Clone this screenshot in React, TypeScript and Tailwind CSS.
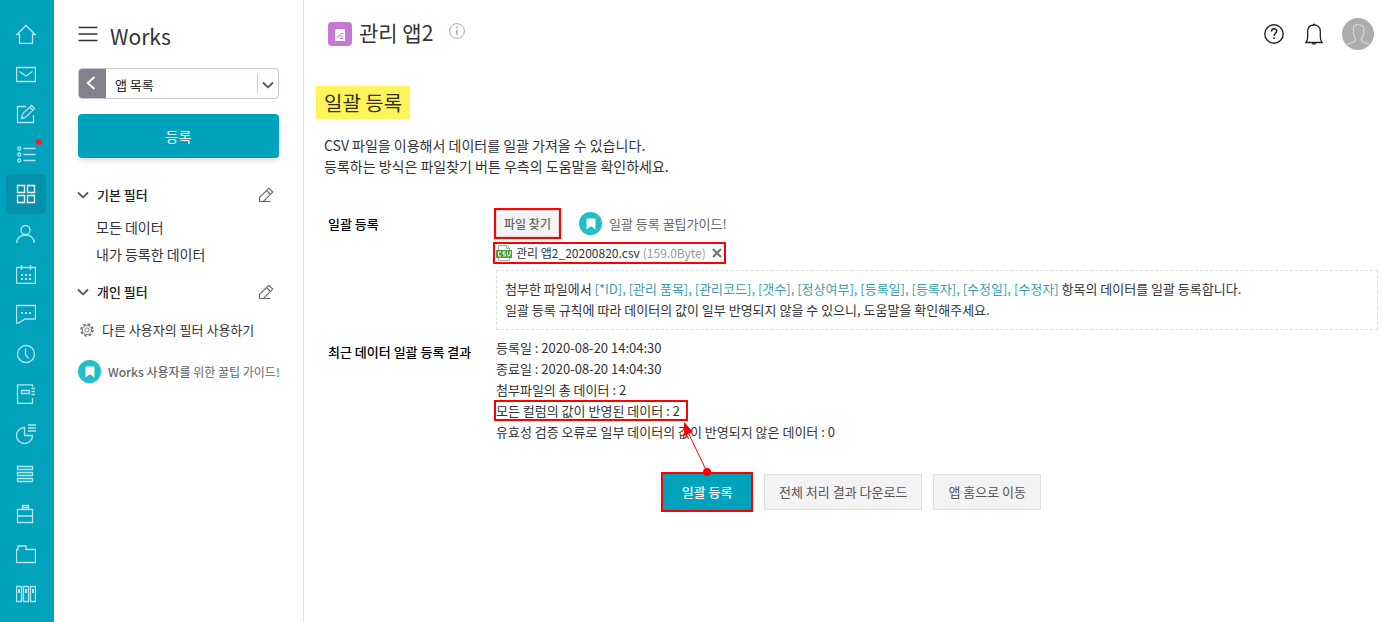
import React from 'react';

interface RailItem {
  label: string;
  icon: React.ReactNode;
  active?: boolean;
  dot?: boolean;
}

const RAIL: RailItem[] = [
  { label: '홈', icon: <path d="M1 10.5 10 1.5l9 9h-2.5v9h-13v-9z" /> },
  { label: '메일', icon: <path d="M.5 3.5h19v14H.5zM3.5 7.5l6.5 4.5 6.5-4.5" /> },
  { label: '게시판', icon: <path d="M10 2.5H1.5v16h16V11M5.5 14.500l1-4.500 9-8.500 3 3-9 9zM14 3.500l3 3" /> },
  {
    label: '할 일',
    dot: true,
    icon: (
      <>
        <circle cx="3.300" cy="4.500" r="1.500" />
        <circle cx="3.300" cy="10.500" r="1.500" />
        <circle cx="3.300" cy="16.500" r="1.500" />
        <path d="M7.500 4.500h12M7.500 10.500h12M7.500 16.500h12" />
      </>
    ),
  },
  { label: 'Works', active: true, icon: <path d="M1.500 1.500h7v7h-7zM11.500 1.500h7v7h-7zM1.500 11.500h7v7h-7zM11.500 11.500h7v7h-7z" /> },
  {
    label: '주소록',
    icon: (
      <>
        <circle cx="9.500" cy="6" r="4.500" />
        <path d="M.8 19c0-4.500 3.500-8 8.700-8s8.700 3.500 8.700 8" />
      </>
    ),
  },
  {
    label: '캘린더',
    icon: (
      <>
        <path d="M.5 3.500h19v16H.5zM5.500 1v5M14.500 1v5" />
        <path d="M5 11h2M9 11h2M13 11h2M5 15h2M9 15h2M13 15h2" strokeWidth="2" />
      </>
    ),
  },
  {
    label: '대화',
    icon: (
      <>
        <path d="M.5 1.500h19v13.500H9l-6.500 4h-2z" />
        <path d="M5 9h2M9 9h2M13 9h2" strokeWidth="2" />
      </>
    ),
  },
  {
    label: '근태',
    icon: (
      <>
        <circle cx="10" cy="10" r="8.500" />
        <path d="M9.500 4.500v6l3 4" />
      </>
    ),
  },
  {
    label: '보고',
    icon: <path d="M17 .8H1.500v18.700h15V14M16.500 .8v2M5.500 6.500h8v3h-8zM15.500 4.500h3.500M15.500 7.500h3.500M15.500 10.500h3.500" />,
  },
  {
    label: '설문',
    icon: (
      <>
        <path d="M8.500 3.500a8 8 0 1 0 8 8h-8z" />
        <path d="M12 1h8M12 4h8M12 7h8" strokeWidth="1.600" />
      </>
    ),
  },
  { label: '자료실', icon: <path d="M1.500 2.500h15v3h-15zM1.500 8.500h15v3h-15zM1.500 14.500h15v3h-15z" /> },
  { label: '전자결재', icon: <path d="M1.500 5.500h15v13h-15zM1.500 12h15M6.500 5V1.500h6V5M6.500 3.500h6" /> },
  { label: '문서함', icon: <path d="M.5 5.500h1.500v-3.500h8v3.500h9.500v13H.5z" /> },
  {
    label: '예약',
    icon: (
      <>
        <path d="M.5 2.500h5v15h-5zM7.500 2.500h5v15h-5zM14.500 2.500h5v15h-5z" />
        <path d="M3 5v4M10 5v4M17 5v4" strokeWidth="2" />
      </>
    ),
  },
];

const COLUMNS = ['*ID', '관리 품목', '관리코드', '갯수', '정상여부', '등록일', '등록자', '수정일', '수정자'];

const Chevron = ({ className = '' }: { className?: string }) => (
  <svg viewBox="0 0 12 8" className={`h-2 w-3 ${className}`} fill="none" stroke="#555" strokeWidth="1.800">
    <path d="M1 1.500 6 6.300l5-4.800" />
  </svg>
);

const Pencil = () => (
  <svg viewBox="0 0 16 16" className="size-4" fill="none" stroke="#666" strokeWidth="1.100">
    <path d="M1.500 14.500v-4L10.800 1.300l4 3.800-9.400 9.400zM8.600 3.600l3.900 3.900M1.500 14.500h11" />
  </svg>
);

const GuideMark = () => (
  <span className="flex size-[23px] shrink-0 items-center justify-center rounded-full bg-[#22bfc8]">
    <svg viewBox="0 0 10 12" className="h-3 w-2.5" fill="#fff">
      <path d="M.5 1.500Q.5.5 1.500.5h7q1 0 1 1v10L5 8.300.5 11.500z" />
    </svg>
  </span>
);

const FilterHeading = ({ title }: { title: string }) => (
  <div className="flex h-6 items-center justify-between pr-[5px]">
    <button className="flex items-center gap-2 text-[13px] font-medium text-[#222]">
      <Chevron className="-ml-px" />
      {title}
    </button>
    <button aria-label={`${title} 편집`}>
      <Pencil />
    </button>
  </div>
);

const Rail = () => (
  <nav className="w-[54px] shrink-0 bg-[#01a2bb] pt-3.5 pl-1.5">
    {RAIL.map(item => (
      <a
        key={item.label}
        href="#"
        aria-label={item.label}
        className={`relative flex size-10 items-center justify-center rounded ${item.active ? 'bg-[#0492ab] text-white' : 'text-[#b5e4ea]'}`}
      >
        <svg viewBox="0 0 20 20" className="size-5" fill="none" stroke="currentColor" strokeWidth="1.300">
          {item.icon}
        </svg>
        {item.dot && <span className="absolute top-[5px] right-1 size-1.5 rounded-full bg-[#fb1f1f]" />}
      </a>
    ))}
  </nav>
);

const Sidebar = () => (
  <aside className="w-[250px] shrink-0 border-r border-[#ddd] px-6 pt-5">
    <div className="flex h-8 items-center">
      <button aria-label="메뉴" className="pb-1">
        <svg viewBox="0 0 20 16" className="h-4 w-5" stroke="#333" strokeWidth="1.500">
          <path d="M.5 1.500h19M.5 8h19M.5 14.500h19" />
        </svg>
      </button>
      <h2 className="ml-3 text-[21px] leading-8 text-[#333]">Works</h2>
    </div>

    <div className="mt-4 flex h-[31px] overflow-hidden rounded border border-[#c8c8d6]">
      <button aria-label="뒤로" className="flex w-[27px] items-center justify-center bg-[#82828f] pr-1 pb-0.5">
        <svg viewBox="0 0 10 14" className="h-3.5 w-2.5" fill="none" stroke="#fff" strokeWidth="2">
          <path d="M8.500 1 1.800 7l6.700 6" />
        </svg>
      </button>
      <div className="relative flex flex-1 items-center">
        <select aria-label="앱 목록" className="h-full w-full appearance-none bg-transparent pt-0.5 pl-[9px] text-[13px] text-[#222]">
          <option>앱 목록</option>
        </select>
        <span className="pointer-events-none absolute right-0 flex h-[19px] items-center border-l border-[#ccc] px-1 pt-0.5">
          <Chevron />
        </span>
      </div>
    </div>

    <button className="mt-[15px] h-11 w-full rounded bg-[#01a2bb] text-sm text-white shadow-md">등록</button>

    <div className="mt-[25px]">
      <FilterHeading title="기본 필터" />
      <ul className="mt-[7px] pl-[18px] text-sm leading-[27px] text-[#333]">
        <li><a href="#">모든 데이터</a></li>
        <li><a href="#">내가 등록한 데이터</a></li>
      </ul>
    </div>
    <div className="mt-3">
      <FilterHeading title="개인 필터" />
    </div>

    <a href="#" className="mt-4 flex items-center gap-2 pl-0.5 text-[13px] leading-5 text-[#333]">
      <svg viewBox="0 0 16 16" className="size-3.5 shrink-0" fill="none" stroke="#777">
        <circle cx="8" cy="8" r="6.600" strokeWidth="2.200" strokeDasharray="2.900 2.284" />
        <circle cx="8" cy="8" r="5.200" />
        <circle cx="8" cy="8" r="2.400" />
      </svg>
      다른 사용자의 필터 사용하기
    </a>
    <a href="#" className="mt-5 flex items-center gap-[7px] text-xs whitespace-nowrap text-[#666]">
      <GuideMark />
      <span><span className="font-medium">Works 사용자를</span> 위한 꿀팁 가이드!</span>
    </a>
  </aside>
);

const Header = () => (
  <header className="flex items-start justify-between pt-[18px] pr-1 pl-1">
    <div className="flex h-8 items-center">
      <span className="flex size-6 items-center justify-center rounded bg-[#c678d4]">
        <svg viewBox="0 0 12 14" className="mt-0.5 h-3.5 w-3">
          <path d="M1 1h10v12H1z" fill="#fff" />
          <path d="M2.500 9h1.500l2.500-3.500M7 5.500h2.500M6 8h3.500M6 10.500h3.500" stroke="#c678d4" fill="none" />
        </svg>
      </span>
      <h1 className="ml-[7px] pb-[3px] text-[21px] leading-[29px] text-[#333]">관리 앱2</h1>
      <button aria-label="앱 정보" className="mb-1.5 ml-4">
        <svg viewBox="0 0 16 16" className="size-4" fill="none" stroke="#aaa">
          <circle cx="8" cy="8" r="7.400" />
          <path d="M8 3.500v1.800M8 6.800v5.200" strokeWidth="1.600" />
        </svg>
      </button>
    </div>
    <div className="flex items-center">
      <button aria-label="도움말">
        <svg viewBox="0 0 20 20" className="size-5" fill="none" stroke="#222">
          <circle cx="10" cy="10" r="9.200" strokeWidth="1.400" />
          <path d="M7.500 7.500c0-3.600 5.200-3.400 5.200-.4 0 2-2.600 2.300-2.600 4.700M10.100 13.200v1.800" strokeWidth="1.600" />
        </svg>
      </button>
      <button aria-label="알림" className="ml-5">
        <svg viewBox="0 0 20 22" className="h-[22px] w-5" fill="none" stroke="#222" strokeWidth="1.300">
          <path d="M2 19.500h16c-1.500-1.500-1.700-3-1.700-6V8.500c0-4-2.300-6.500-6.300-6.500S3.700 4.500 3.700 8.500v5c0 3-.2 4.500-1.700 6zM8.200 20c.3 1.600 3.300 1.600 3.600 0M9 1.300h2" />
        </svg>
      </button>
      <button aria-label="내 프로필" className="ml-[18px] size-8 overflow-hidden rounded-full bg-[#adadad]">
        <svg viewBox="0 0 32 32" className="size-8" fill="none" stroke="#d6d6d6" strokeWidth="1.100">
          <path d="M5.500 27c1.500-2.500 8-2 8-5.500 0-1.500-.8-2-1.300-3.500-1.200-.8-1.500-3.500-.7-4.500-.7-4 .5-5.500 2-6l1-1.500c1 1.200 3.500.8 5.500 1.500 2 .8 2.200 3.500 1.500 6 .8 1 .5 3.700-.7 4.500-.5 1.500-1.300 2-1.300 3.500 0 3.500 6.500 3 8 5.500" />
        </svg>
      </button>
    </div>
  </header>
);

export default function App() {
  return (
    <div className="flex min-h-screen bg-white font-['Noto_Sans_CJK_KR',sans-serif] text-[#333]">
      <Rail />
      <Sidebar />
      <main className="min-w-0 flex-1 pr-[22px] pb-10 pl-5">
        <Header />

        <div className="mt-9 -ml-2">
          <h2 className="inline-block bg-[#fff55a] px-2 text-xl leading-[33px] text-[#33301a]">일괄 등록</h2>
        </div>
        <p className="mt-4 text-sm leading-[21px]">
          CSV 파일을 이용해서 데이터를 일괄 가져올 수 있습니다.
          <br />
          등록하는 방식은 파일찾기 버튼 우측의 도움말을 확인하세요.
        </p>

        <section className="mt-[33px] grid grid-cols-[168px_1fr] pl-1 text-[13px] leading-[21px]">
          <h3 className="pt-[3px] font-medium text-black">일괄 등록</h3>
          <div>
            <div className="flex items-center">
              <button className="h-[27px] w-[63px] border border-[#ddd] bg-[#f3f3f3] text-xs font-medium text-[#666] outline-2 outline-[#f00]">
                파일 찾기
              </button>
              <a href="#" className="ml-5 flex items-center gap-[7px] text-[#666]">
                <GuideMark />
                일괄 등록 꿀팁가이드!
              </a>
            </div>
            <div className="mt-[7px] -ml-px flex h-[18px] w-fit items-center pr-0.5 outline-2 outline-[#f00]">
              <svg viewBox="0 0 16 16" className="ml-px size-4 shrink-0">
                <path d="M2.500.5h8l3 3v12h-11z" fill="#fff" stroke="#aaa" />
                <path d="M10.500.5v3h3" fill="none" stroke="#aaa" />
                <path d="M0 5h16v8H0z" fill="#4aa13c" />
                <path d="M5 7H2.500v4H5M9.500 7H7v2h2.500v2H7M11.500 6.500v3l1.300 1.800 1.300-1.800v-3" fill="none" stroke="#fff" />
              </svg>
              <span className="ml-1 text-xs">관리 앱2_20200820.csv</span>
              <span className="ml-[3px] text-xs text-[#999]">(159.0Byte)</span>
              <button aria-label="첨부파일 삭제" className="ml-1.5">
                <svg viewBox="0 0 10 10" className="size-2.5" stroke="#777" strokeWidth="2.200">
                  <path d="m1 1 8 8M9 1 1 9" />
                </svg>
              </button>
            </div>
            <div className="mt-2 border border-dashed border-[#ddd] px-2 pt-[7px] pb-[9px]">
              첨부한 파일에서{' '}
              <span className="text-[#3a9fb0]">{COLUMNS.map(name => `[${name}]`).join(', ')}</span> 항목의 데이터를 일괄 등록합니다.
              <br />
              일괄 등록 규칙에 따라 데이터의 값이 일부 반영되지 않을 수 있으니, 도움말을 확인해주세요.
            </div>
          </div>

          <h3 className="mt-[7px] pt-1 font-medium text-black">최근 데이터 일괄 등록 결과</h3>
          <div className="mt-[7px]">
            <p>등록일 : 2020-08-20 14:04:30</p>
            <p>종료일 : 2020-08-20 14:04:30</p>
            <p>첨부파일의 총 데이터 : 2</p>
            <p className="-ml-0.5 w-fit pr-2 pl-0.5 outline-2 -outline-offset-2 outline-[#f00]">모든 컬럼의 값이 반영된 데이터 : 2</p>
            <p>유효성 검증 오류로 일부 데이터의 값이 반영되지 않은 데이터 : 0</p>
          </div>
        </section>

        <div className="mt-[30px] flex items-center justify-center gap-[11px] text-[13px] text-[#555]">
          <div className="relative border-2 border-[#f00]">
            <button className="h-9 w-[88px] bg-[#01a2bb] pb-px font-medium text-white">일괄 등록</button>
            <svg viewBox="0 0 32 54" className="pointer-events-none absolute bottom-[34px] left-[19px] h-[54px] w-8" fill="#f00">
              <path d="M3 4 25 50" stroke="#f00" />
              <path d="M2 0 11 10 2 14z" />
              <circle cx="25" cy="50" r="4" />
            </svg>
          </div>
          <button className="h-9 border border-[#ddd] bg-[#f3f3f3] px-3.5 pb-px">전체 처리 결과 다운로드</button>
          <button className="h-9 border border-[#ddd] bg-[#f3f3f3] px-3.5 pb-px">앱 홈으로 이동</button>
        </div>
      </main>
    </div>
  );
}
